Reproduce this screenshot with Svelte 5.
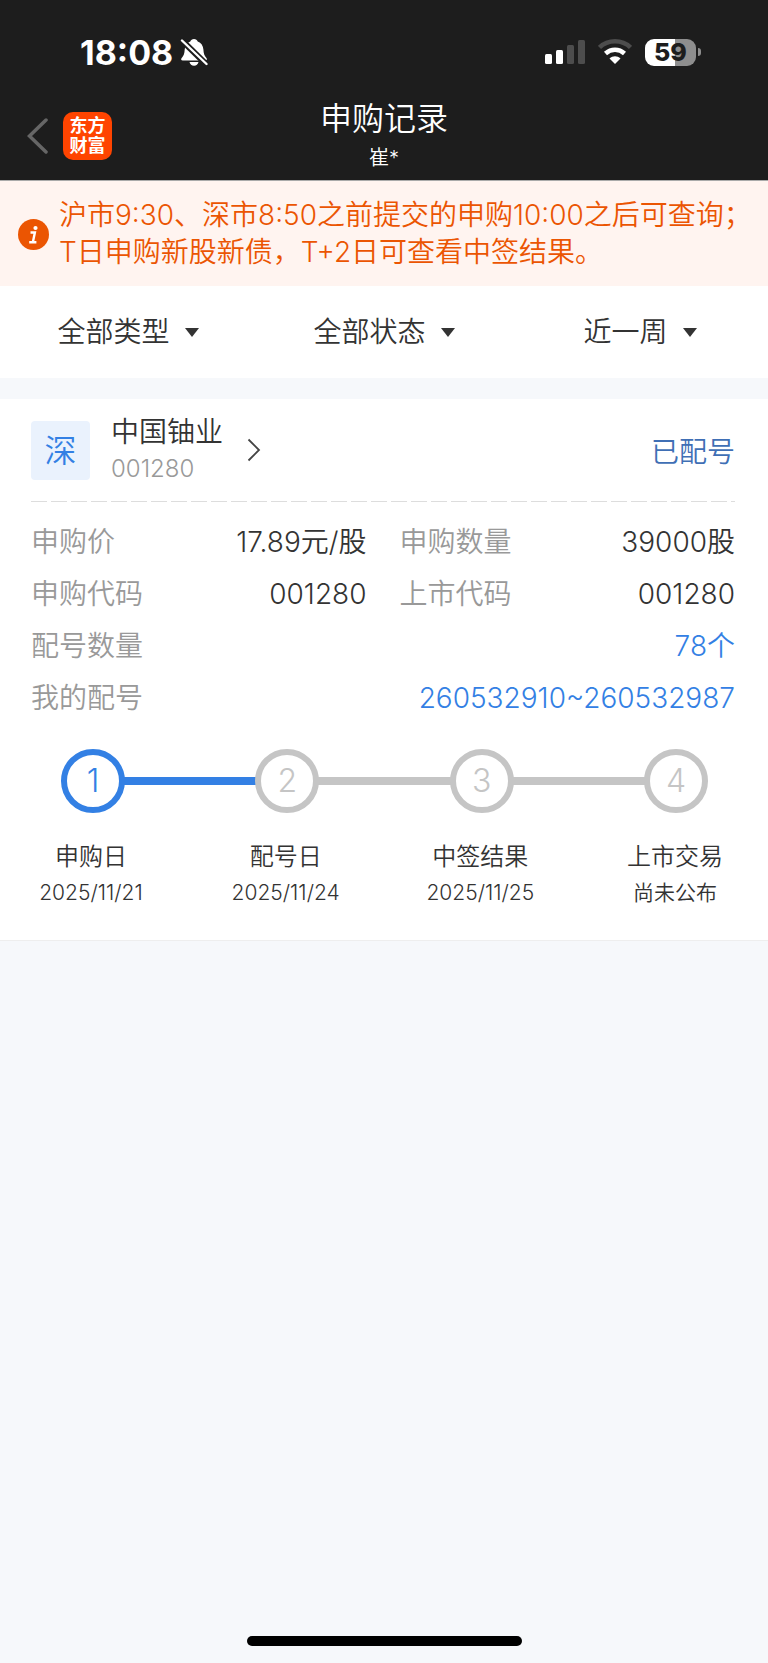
<script lang="ts">
	interface Filter {
		id: string;
		label: string;
		options: string[];
	}

	interface Step {
		name: string;
		date: string;
		done: boolean;
	}

	const filters: Filter[] = [
		{ id: 'type', label: '类型', options: ['全部类型', '新股', '新债'] },
		{ id: 'status', label: '状态', options: ['全部状态', '已配号', '已中签'] },
		{ id: 'range', label: '时间', options: ['近一周', '近一月', '近一年'] }
	];

	const record = {
		market: '深',
		name: '中国铀业',
		code: '001280',
		status: '已配号'
	};

	const details = [
		{ label: '申购价', value: '17.89元/股' },
		{ label: '申购数量', value: '39000股' },
		{ label: '申购代码', value: '001280' },
		{ label: '上市代码', value: '001280' },
		{ label: '配号数量', value: '78个', link: true },
		{ label: '我的配号', value: '260532910~260532987', link: true }
	];

	const steps: Step[] = [
		{ name: '申购日', date: '2025/11/21', done: true },
		{ name: '配号日', date: '2025/11/24', done: false },
		{ name: '中签结果', date: '2025/11/25', done: false },
		{ name: '上市交易', date: '尚未公布', done: false }
	];
</script>

<div class="page">
	<header>
		<div class="status-bar">
			<div class="clock">
				<span>18:08</span>
				<svg width="28" height="30" viewBox="0 0 28 30" aria-hidden="true">
					<path
						d="M14 2c1.800 0 3.200 1 3.700 2.400 3.500 1.200 5.500 4.200 5.700 8.200.2 4.400 1 6.300 3 8.300.9.900.5 2.600-1 2.600H2.700c-1.600 0-2-1.700-1-2.600 2-2 2.800-3.900 3-8.300.2-4 2.200-7 5.600-8.200C10.800 3 12.200 2 14 2z"
						fill="#fff"
					/>
					<path d="M9.500 25h9c-.5 2.300-2.200 3.700-4.500 3.700S10 27.300 9.500 25z" fill="#fff" />
					<path d="M0 1.500L28 29" stroke="#1d1d1d" stroke-width="6" />
					<path d="M2 3.500L26.500 27" stroke="#fff" stroke-width="2.400" stroke-linecap="round" />
				</svg>
			</div>
			<div class="signals">
				<svg width="40" height="26" viewBox="0 0 40 26" aria-hidden="true">
					<rect x="0" y="15" width="7" height="10" rx="1.500" fill="#fff" />
					<rect x="11" y="11" width="7" height="14" rx="1.500" fill="#fff" />
					<rect x="22" y="6" width="7" height="19" rx="1.500" fill="#4d4d4d" />
					<rect x="33" y="1" width="7" height="24" rx="1.500" fill="#4d4d4d" />
				</svg>
				<svg width="34" height="26" viewBox="0 0 34 26" aria-hidden="true">
					<path d="M1.500 8.500C10 .3 24 .3 32.500 8.500" fill="none" stroke="#4d4d4d" stroke-width="4.500" />
					<path d="M7.500 14.500C13 9.500 21 9.500 26.500 14.500" fill="none" stroke="#fff" stroke-width="4.500" />
					<path d="M17 25l-5.500-5.600c3.200-2.900 7.800-2.900 11 0z" fill="#fff" />
				</svg>
				<div class="battery">
					<span class="level">59</span>
					<span class="nub"></span>
				</div>
			</div>
		</div>
		<nav>
			<div class="nav-left">
				<button class="back" aria-label="返回">
					<svg width="22" height="36" viewBox="0 0 22 36">
						<path d="M19 2L2.500 18 19 34" fill="none" stroke="#666" stroke-width="3.500" stroke-linecap="round" />
					</svg>
				</button>
				<div class="logo">东方<br />财富</div>
			</div>
			<div class="title">
				<h1>申购记录</h1>
				<p>崔*</p>
			</div>
		</nav>
	</header>

	<div class="notice">
		<svg width="31" height="31" viewBox="0 0 31 31" aria-hidden="true">
			<circle cx="15.500" cy="15.500" r="15.500" fill="#eb5502" />
			<circle cx="17.500" cy="9" r="2.100" fill="#fff" />
			<path d="M12.500 13.500h4.400l-2 9.500M11.200 23.300h7.200" fill="none" stroke="#fff" stroke-width="2.400" />
		</svg>
		<p>沪市9:30、深市8:50之前提交的申购10:00之后可查询；<br />T日申购新股新债，T+2日可查看中签结果。</p>
	</div>

	<div class="filters">
		{#each filters as filter (filter.id)}
			<label for={filter.id}>
				<select id={filter.id} aria-label={filter.label}>
					{#each filter.options as option}
						<option>{option}</option>
					{/each}
				</select>
				<svg width="14" height="9" viewBox="0 0 14 9" aria-hidden="true">
					<path d="M0 0h14L7 9z" fill="#333" />
				</svg>
			</label>
		{/each}
	</div>

	<main>
		<div class="stock">
			<span class="market">{record.market}</span>
			<div class="stock-name">
				<h2>{record.name}</h2>
				<p>{record.code}</p>
			</div>
			<button class="more" aria-label="查看详情">
				<svg width="14" height="24" viewBox="0 0 14 24">
					<path d="M1.500 1.500L12 12 1.500 22.500" fill="none" stroke="#444" stroke-width="1.800" />
				</svg>
			</button>
			<span class="state">{record.status}</span>
		</div>

		<div class="divider"></div>

		<dl>
			{#each details as item}
				<div class:wide={item.link}>
					<dt>{item.label}</dt>
					<dd>{item.value}</dd>
				</div>
			{/each}
		</dl>

		<div class="track">
			{#each steps as step, index}
				{#if index > 0}
					<span class="line" class:done={steps[index - 1].done}></span>
				{/if}
				<span class="dot" class:done={step.done}>{index + 1}</span>
			{/each}
		</div>
		<ol>
			{#each steps as step}
				<li>
					<strong>{step.name}</strong>
					<span>{step.date}</span>
				</li>
			{/each}
		</ol>
	</main>

	<div class="home-indicator"></div>
</div>

<style>
	:global(body) {
		background: #f6f8fb;
	}

	.page {
		display: flex;
		flex-direction: column;
		min-height: 100vh;
		background: #f6f8fb;
		color: #333;
		font-family: Inter, 'Noto Sans CJK SC', sans-serif;
		font-size: 28px;
		font-weight: 350;
	}

	h1,
	h2,
	p,
	dl,
	dd,
	ol {
		margin: 0;
		padding: 0;
		font-weight: inherit;
	}

	svg {
		display: block;
		flex: none;
	}

	button {
		padding: 0;
		border: 0;
		background: none;
	}

	header {
		background: #1d1d1d;
		border-bottom: 1px solid #aaa;
		color: #fff;
	}

	.status-bar {
		display: flex;
		align-items: center;
		justify-content: space-between;
		height: 88px;
		padding: 8px 67px 0 80px;
	}

	.clock,
	.signals {
		display: flex;
		align-items: center;
	}

	.clock {
		gap: 7px;
		font-size: 34px;
		font-weight: 700;
	}

	.signals {
		gap: 13px;
	}

	.battery {
		display: flex;
		align-items: center;
		gap: 2px;
	}

	.level {
		width: 51px;
		border-radius: 9px;
		background: linear-gradient(90deg, #fff 59%, #8e8e8e 59%);
		color: #1d1d1d;
		font-size: 25px;
		font-weight: 800;
		line-height: 27px;
		text-align: center;
	}

	.nub {
		width: 3px;
		height: 8px;
		border-radius: 0 4px 4px 0;
		background: #8e8e8e;
	}

	nav {
		display: grid;
		grid-template-columns: 1fr auto 1fr;
		height: 84px;
	}

	.nav-left {
		display: flex;
		align-items: center;
		gap: 14px;
		padding: 0 0 4px 27px;
	}

	.logo {
		width: 49px;
		padding: 4px 0;
		border-radius: 10px;
		background: #ff4400;
		font-size: 18px;
		font-weight: 700;
		line-height: 20px;
		text-align: center;
	}

	.title {
		text-align: center;
	}

	h1 {
		font-size: 32px;
		line-height: 46px;
	}

	.title p {
		font-size: 20px;
		line-height: 32px;
	}

	.notice {
		display: flex;
		align-items: center;
		gap: 10px;
		padding: 16px 18px 15px;
		background: #fff4f0;
		color: #eb5502;
	}

	.notice p {
		line-height: 37px;
		white-space: nowrap;
	}

	.filters {
		display: grid;
		grid-template-columns: repeat(3, 1fr);
		height: 92px;
		margin-bottom: 21px;
		background: #fff;
	}

	.filters label {
		display: flex;
		align-items: center;
		justify-content: center;
		gap: 15px;
	}

	select {
		appearance: none;
		field-sizing: content;
		padding: 0;
		border: 0;
		background: none;
		color: inherit;
		font: inherit;
		line-height: 40px;
	}

	main {
		padding: 16px 33px 30px 31px;
		border-bottom: 1px solid #eee;
		background: #fff;
	}

	.stock {
		display: flex;
		align-items: center;
		height: 70px;
		margin-bottom: 16px;
	}

	.market {
		width: 59px;
		margin-right: 21px;
		border-radius: 4px;
		background: #eaf2fd;
		color: #3380e4;
		font-size: 32px;
		line-height: 59px;
		text-align: center;
	}

	h2 {
		font-size: 28px;
		line-height: 38px;
	}

	.stock-name p {
		color: #999;
		font-size: 24px;
		line-height: 36px;
	}

	.more {
		margin-left: 24px;
	}

	.state {
		margin-left: auto;
		color: #3f6fb5;
	}

	.divider {
		height: 1px;
		background: repeating-linear-gradient(90deg, #ddd 0 16px, transparent 16px 20px);
	}

	dl {
		display: grid;
		grid-template-columns: 1fr 1fr;
		column-gap: 33px;
		padding-top: 14px;
	}

	dl div {
		display: flex;
		justify-content: space-between;
		line-height: 52px;
	}

	dt {
		color: #999;
	}

	.wide {
		grid-column: 1 / -1;
	}

	.wide dd {
		color: #3380e4;
	}

	.track {
		display: flex;
		align-items: center;
		margin: 25px 27px 0 30px;
	}

	.dot {
		box-sizing: border-box;
		width: 64px;
		border: 6px solid #c5c5c5;
		border-radius: 50%;
		color: #c5c5c5;
		font-size: 32px;
		font-weight: 300;
		line-height: 52px;
		text-align: center;
	}

	.line {
		flex: 1;
		height: 8px;
		margin: 0 -1px;
		background: #c5c5c5;
	}

	.dot.done {
		border-color: #3380e4;
		color: #3380e4;
	}

	.line.done {
		background: #3380e4;
	}

	ol {
		display: flex;
		justify-content: space-between;
		padding-top: 25px;
		list-style: none;
	}

	li {
		display: flex;
		flex-direction: column;
		align-items: center;
		width: 120px;
		font-size: 21px;
		line-height: 34px;
		white-space: nowrap;
	}

	strong {
		font-size: 24px;
		font-weight: inherit;
		line-height: 38px;
	}

	.home-indicator {
		width: 275px;
		height: 10px;
		margin: auto auto 17px;
		border-radius: 5px;
		background: #000;
	}
</style>
